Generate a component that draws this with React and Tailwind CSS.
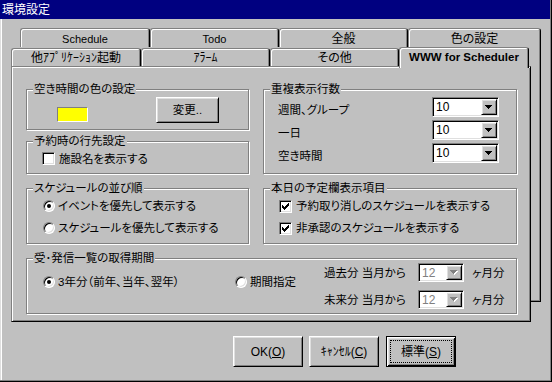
import React from "react";

const RAISED =
  "border border-t-white border-l-white border-r-black border-b-black shadow-[inset_1px_1px_0_#dfdfdf,inset_-1px_-1px_0_#808080]";
const SUNKEN =
  "border border-t-[#808080] border-l-[#808080] border-r-white border-b-white shadow-[inset_1px_1px_0_#000,inset_-1px_-1px_0_#dfdfdf]";
const TAB =
  "flex items-center justify-center whitespace-nowrap border-t border-l border-r border-t-[#808080] border-l-[#808080] border-r-black rounded-t-[3px] shadow-[inset_1px_1px_0_#fff,inset_-1px_0_0_#808080]";

function Group({ label, className, children }) {
  return (
    <div
      className={
        "relative border border-[#808080] shadow-[1px_1px_0_#fff,inset_1px_1px_0_#fff] " +
        className
      }
    >
      <div className="absolute left-[6px] top-[-8px] px-[1px] bg-[#c0c0c0] leading-[14px] whitespace-nowrap">
        {label}
      </div>
      {children}
    </div>
  );
}

function Check({ checked }) {
  return (
    <div
      className={
        "w-[13px] h-[13px] shrink-0 bg-white flex items-center justify-center " +
        SUNKEN
      }
    >
      {checked && (
        <svg width="9" height="9" viewBox="0 0 9 9" shapeRendering="crispEdges">
          <path
            fill="#000"
            d="M7 1h1v1h-1z M6 2h2v1h-2z M1 3h1v1h-1z M5 3h3v1h-3z M1 4h2v1h-2z M4 4h3v1h-3z M1 5h5v1h-5z M2 6h3v1h-3z M3 7h1v1h-1z"
          />
        </svg>
      )}
    </div>
  );
}

function Radio({ checked }) {
  return (
    <div className="w-[12px] h-[12px] shrink-0 rounded-full bg-white border border-t-[#808080] border-l-[#808080] border-r-white border-b-white shadow-[inset_1px_1px_0_#000,inset_-1px_-1px_0_#dfdfdf] flex items-center justify-center">
      {checked && <div className="w-[4px] h-[4px] rounded-full bg-black" />}
    </div>
  );
}

function Arrow({ disabled }) {
  return (
    <svg width="8" height="5" viewBox="0 0 8 5" shapeRendering="crispEdges">
      {disabled && (
        <path fill="#fff" d="M1 1h7v1h-7z M2 2h5v1h-5z M3 3h3v1h-3z M4 4h1v1h-1z" />
      )}
      <path
        fill={disabled ? "#808080" : "#000"}
        d="M0 0h7v1h-7z M1 1h5v1h-5z M2 2h3v1h-3z M3 3h1v1h-1z"
      />
    </svg>
  );
}

function Combo({ value, w, h, disabled }) {
  return (
    <div className={"flex shrink-0 bg-white p-[1px] text-[12px] " + w + " " + h + " " + SUNKEN}>
      <div
        className={
          "flex-1 flex items-center pl-[2px] " +
          (disabled ? "text-[#808080]" : "text-black")
        }
      >
        {value}
      </div>
      <div className={"w-[16px] h-full flex items-center justify-center bg-[#c0c0c0] " + RAISED}>
        <Arrow disabled={disabled} />
      </div>
    </div>
  );
}

function Button({ children }) {
  return (
    <div className={"w-[70px] h-[31px] flex items-center justify-center " + RAISED}>
      {children}
    </div>
  );
}

export default function App() {
  return (
    <div className="w-[552px] h-[382px] bg-[#c0c0c0] overflow-hidden text-black text-[12px] leading-[14px] font-['Liberation_Sans','Noto_Sans_CJK_JP',sans-serif] [font-feature-settings:'palt'] shadow-[inset_-1px_-1px_0_#000,inset_-2px_-2px_0_#808080,inset_1px_0_0_#dfdfdf,inset_2px_0_0_#fff]">
      {/* title bar */}
      <div className="h-[19px] mr-[2px] bg-[#000080] text-white flex items-center pl-[2px] text-[12px]">
        環境設定
      </div>

      {/* tab control */}
      <div className="mt-[9px] ml-[11px] grid">
        {/* back layer */}
        <div className="col-start-1 row-start-1 ml-[9px] w-[521px] flex flex-col">
          <div className="flex h-[19px]">
            <div className={"w-[130px] h-[19px] pt-[2px] text-[11px] " + TAB}>Schedule</div>
            <div className={"w-[129px] h-[19px] pt-[2px] text-[11px] " + TAB}>Todo</div>
            <div className={"w-[129px] h-[19px] pt-[2px] " + TAB}>全般</div>
            <div className={"w-[133px] h-[19px] pt-[2px] " + TAB}>色の設定</div>
          </div>
          <div className="h-[255px] border-r border-b border-r-black border-b-black shadow-[inset_-1px_-1px_0_#808080]" />
        </div>

        {/* front layer */}
        <div className="col-start-1 row-start-1 mt-[19px] flex flex-col">
          <div className="flex items-end h-[19px]">
            <div className={"w-[130px] h-[18px] pt-[1px] " + TAB}>他ｱﾌﾟﾘｹｰｼｮﾝ起動</div>
            <div className={"w-[129px] h-[18px] pt-[1px] " + TAB}>ｱﾗｰﾑ</div>
            <div className={"w-[129px] h-[18px] pt-[1px] " + TAB}>その他</div>
            <div
              className={
                "w-[130px] h-[21px] -mb-[2px] pb-[2px] relative z-10 bg-[#c0c0c0] font-bold text-[11.5px] " +
                TAB
              }
            >
              WWW for Scheduler
            </div>
          </div>

          <div className="w-[520px] h-[256px] bg-[#c0c0c0] text-[11.5px] border border-t-[#808080] border-l-[#808080] border-r-black border-b-black shadow-[inset_1px_1px_0_#fff,inset_-1px_-1px_0_#808080] pt-[22px] pl-[14px] flex flex-col">
            {/* row 1 */}
            <div className="flex gap-[14px]">
              <div className="w-[223px] flex flex-col">
                <Group label="空き時間の色の設定" className="h-[41px]">
                  <div className="flex items-start pl-[30px]">
                    <div className="w-[31px] h-[15px] mt-[17px] bg-[#ffff00] border border-t-[#808080] border-l-[#808080] border-r-white border-b-white" />
                    <div className={"w-[63px] h-[26px] ml-[68px] mt-[7px] flex items-center justify-center " + RAISED}>
                      変更..
                    </div>
                  </div>
                </Group>
                <Group label="予約時の行先設定" className="h-[33px] mt-[11px]">
                  <div className="flex items-center h-full pl-[15px] pt-[2px] gap-[4px]">
                    <Check />
                    <span>施設名を表示する</span>
                  </div>
                </Group>
              </div>
              <Group label="重複表示行数" className="w-[254px] h-[85px]">
                <div className="pt-[7px] pl-[14px] flex flex-col gap-[3px]">
                  {["週間、グループ", "一日", "空き時間"].map((l) => (
                    <div key={l} className="flex items-center h-[20px]">
                      <div className="w-[154px] pt-[5px]">{l}</div>
                      <Combo value="10" w="w-[67px]" h="h-[20px]" />
                    </div>
                  ))}
                </div>
              </Group>
            </div>

            {/* row 2 */}
            <div className="flex gap-[14px] mt-[14px]">
              <Group label="スケジュールの並び順" className="w-[223px] h-[56px]">
                <div className="pt-[9px] pl-[16px] flex flex-col gap-[6px]">
                  <div className="flex items-center h-[16px] gap-[3px]">
                    <Radio checked />
                    <span>イベントを優先して表示する</span>
                  </div>
                  <div className="flex items-center h-[16px] gap-[3px]">
                    <Radio />
                    <span>スケジュールを優先して表示する</span>
                  </div>
                </div>
              </Group>
              <Group label="本日の予定欄表示項目" className="w-[254px] h-[56px]">
                <div className="pt-[9px] pl-[15px] flex flex-col gap-[6px]">
                  <div className="flex items-center h-[16px] gap-[4px]">
                    <Check checked />
                    <span>予約取り消しのスケジュールを表示する</span>
                  </div>
                  <div className="flex items-center h-[16px] gap-[4px]">
                    <Check checked />
                    <span>非承認のスケジュールを表示する</span>
                  </div>
                </div>
              </Group>
            </div>

            {/* row 3 */}
            <Group label="受･発信一覧の取得期間" className="w-[491px] h-[56px] mt-[14px]">
              <div className="flex items-start pl-[16px]">
                <div className="w-[192px] mt-[15px] h-[16px] flex items-center gap-[3px]">
                  <Radio checked />
                  <span>3年分（前年、当年、翌年）</span>
                </div>
                <div className="w-[89px] mt-[15px] h-[16px] flex items-center gap-[3px]">
                  <Radio />
                  <span>期間指定</span>
                </div>
                <div className="mt-[4px] flex flex-col gap-[8px]">
                  <div className="flex items-center">
                    <span className="w-[94px]">過去分 当月から</span>
                    <Combo value="12" w="w-[46px]" h="h-[19px]" disabled />
                    <span className="ml-[8px]">ヶ月分</span>
                  </div>
                  <div className="flex items-center">
                    <span className="w-[94px]">未来分 当月から</span>
                    <Combo value="12" w="w-[46px]" h="h-[19px]" disabled />
                    <span className="ml-[8px]">ヶ月分</span>
                  </div>
                </div>
              </div>
            </Group>
          </div>
        </div>
      </div>

      {/* buttons */}
      <div className="mt-[14px] flex pl-[233px] gap-[6px]">
        <Button>
          OK(<span className="underline">O</span>)
        </Button>
        <Button>
          ｷｬﾝｾﾙ(<span className="underline">C</span>)
        </Button>
        <div className="w-[70px] h-[31px] ml-[1px] p-[3px] flex border border-black shadow-[inset_1px_1px_0_#fff,inset_-1px_-1px_0_#000,inset_2px_2px_0_#dfdfdf,inset_-2px_-2px_0_#808080]">
          <div className="flex-1 flex items-center justify-center border border-dotted border-black">
            標準(<span className="underline">S</span>)
          </div>
        </div>
      </div>
    </div>
  );
}
